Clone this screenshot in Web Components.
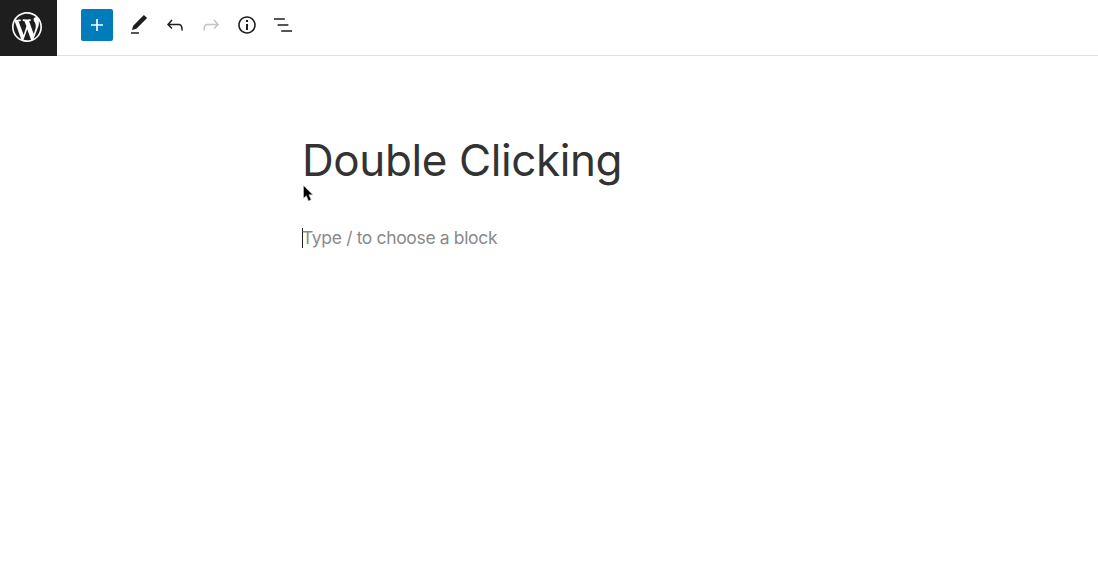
<!DOCTYPE html>
<html>
<head>
<meta charset="utf-8">
<style>
html, body { margin: 0; padding: 0; background: #fff; }
body { font-family: Inter, "Liberation Sans", sans-serif; }
</style>
</head>
<body>
<editor-app>
  <editor-toolbar slot="toolbar">
    <wp-logo slot="logo"></wp-logo>
    <tool-button variant="primary" icon="plus" label="Add block"></tool-button>
    <tool-button icon="edit" label="Tools"></tool-button>
    <tool-button icon="undo" label="Undo"></tool-button>
    <tool-button icon="redo" label="Redo" disabled></tool-button>
    <tool-button icon="info" label="Details"></tool-button>
    <tool-button icon="list" label="List view"></tool-button>
  </editor-toolbar>
  <editor-canvas slot="canvas">
    <post-title>Double Clicking</post-title>
    <block-placeholder>Type / to choose a block</block-placeholder>
  </editor-canvas>
</editor-app>

<script>
const ICONS = {
  plus: 'M18 11.2h-5.2V6h-1.6v5.2H6v1.6h5.2V18h1.6v-5.2H18z',
  edit: 'M20.1 5.1L16.9 2 6.2 12.7l-1.3 4.4 4.5-1.3L20.1 5.1zM4 20.8h8v-1.5H4v1.5z',
  undo: 'M18.3 11.7c-.6-.6-1.4-.9-2.3-.9H6.7l2.9-3.3-1.1-1-4.5 5L8.5 16l1-1-2.7-2.7H16c.5 0 .9.2 1.3.5 1 1 1 3.4 1 4.5v.3h1.5v-.2c0-1.5 0-4.3-1.5-5.7z',
  redo: 'M15.6 6.5l-1.1 1 2.9 3.3H8c-.9 0-1.7.3-2.3.9-1.4 1.5-1.4 4.2-1.4 5.6v.2h1.5v-.3c0-1.1 0-3.5 1-4.5.3-.3.7-.5 1.3-.5h9.2L14.5 15l1.1 1.1 4.6-4.6-4.6-5z',
  info: 'M12 3.2c-4.8 0-8.8 3.9-8.8 8.8 0 4.8 3.9 8.8 8.8 8.8 4.8 0 8.8-3.9 8.8-8.8 0-4.8-4-8.8-8.8-8.8zm0 16c-4 0-7.2-3.3-7.2-7.2C4.8 8 8 4.8 12 4.8s7.2 3.3 7.2 7.2c0 4-3.2 7.2-7.2 7.2zM11 17h2v-6h-2v6zm0-8h2V7h-2v2z',
  list: 'M13.8 5.2H3v1.5h10.8V5.2zm-3.6 12v1.5H21v-1.5H10.2zm7.2-6H6.6v1.5h10.8v-1.5z'
};

class ShadowBase extends HTMLElement {
  constructor() {
    super();
    this.attachShadow({ mode: 'open' });
  }
}

class EditorApp extends ShadowBase {
  connectedCallback() {
    this.shadowRoot.innerHTML = `
<style>
:host { display: flex; flex-direction: column; height: 568px; overflow: hidden; background: #fff; }
</style>
<slot name="toolbar"></slot>
<slot name="canvas"></slot>`;
  }
}

class EditorToolbar extends ShadowBase {
  connectedCallback() {
    this.shadowRoot.innerHTML = `
<style>
:host { display: flex; height: 56px; box-sizing: border-box; border-bottom: 1px solid #e0e0e0; align-items: flex-start; }
.tools { display: flex; align-items: center; height: 55px; padding-left: 24px; padding-bottom: 5px; box-sizing: border-box; }
</style>
<slot name="logo"></slot>
<div class="tools"><slot></slot></div>`;
  }
}

class WpLogo extends ShadowBase {
  connectedCallback() {
    this.shadowRoot.innerHTML = `
<style>
:host { display: flex; width: 57px; height: 56px; flex: none; background: #1e1e1e; align-items: center; justify-content: center; padding: 0 3px 3px 0; box-sizing: border-box; }
svg { display: block; fill: #fff; }
</style>
<svg width="30" height="30" viewBox="0 0 20 20" role="img" aria-label="WordPress"><path d="M20 10c0-5.51-4.49-10-10-10C4.48 0 0 4.49 0 10c0 5.52 4.48 10 10 10 5.51 0 10-4.48 10-10zM7.78 15.37L4.37 6.22c.55-.02 1.17-.08 1.17-.08.5-.06.44-1.13-.06-1.11 0 0-1.45.11-2.37.11-.18 0-.37 0-.58-.01C4.12 2.69 6.87 1.11 10 1.11c2.33 0 4.45.87 6.05 2.34-.68-.11-1.65.39-1.65 1.58 0 .74.45 1.36.9 2.1.35.61.55 1.36.55 2.46 0 1.49-1.4 5-1.4 5l-3.03-8.37c.54-.02.82-.17.82-.17.5-.05.44-1.25-.06-1.22 0 0-1.44.12-2.38.12-.87 0-2.33-.12-2.33-.12-.5-.03-.56 1.2-.06 1.22l.92.08 1.26 3.41zM17.41 10c.24-.64.74-1.87.43-4.25.7 1.29 1.05 2.71 1.05 4.25 0 3.29-1.73 6.24-4.4 7.78.97-2.59 1.94-5.2 2.92-7.78zM6.1 18.09C3.12 16.65 1.11 13.53 1.11 10c0-1.3.23-2.48.72-3.59C3.25 10.3 4.67 14.2 6.1 18.09zm4.03-6.63l2.58 6.98c-.86.29-1.76.45-2.71.45-.79 0-1.57-.11-2.29-.33.81-2.38 1.62-4.74 2.42-7.1z"/></svg>`;
  }
}

class ToolButton extends ShadowBase {
  connectedCallback() {
    const primary = this.getAttribute('variant') === 'primary';
    const disabled = this.hasAttribute('disabled');
    const d = ICONS[this.getAttribute('icon')];
    this.shadowRoot.innerHTML = `
<style>
:host { display: flex; width: 36px; height: 32px; align-items: center; justify-content: center; flex: none; }
:host([variant="primary"]) { width: 32px; margin-right: 8px; background: #007cba; border-radius: 2px; }
button { all: unset; display: flex; }
svg { display: block; width: 24px; height: 24px; fill: ${primary ? '#fff' : disabled ? '#c4c4c4' : '#1e1e1e'}; }
</style>
<button aria-label="${this.getAttribute('label')}"><svg viewBox="0 0 24 24"><path d="${d}"/></svg></button>`;
  }
}

class EditorCanvas extends ShadowBase {
  connectedCallback() {
    this.shadowRoot.innerHTML = `
<style>
:host { display: block; position: relative; flex: 1; padding: 73px 0 0 302px; }
.pointer { position: absolute; left: 303px; top: 129px; display: block; }
</style>
<slot></slot>
<svg class="pointer" width="11" height="18" viewBox="0 0 11 18"><path d="M.5.5v12.8l2.8-2.6 2.2 5.2 2.6-1.2-2.2-4.9h3.9z" fill="#000" stroke="#ccc" stroke-width=".6"/></svg>`;
  }
}

class PostTitle extends ShadowBase {
  connectedCallback() {
    this.shadowRoot.innerHTML = `
<style>
:host { display: block; font: 400 44px/62px Inter, "Liberation Sans", sans-serif; letter-spacing: -0.4px; color: #333; white-space: nowrap; }
</style>
<slot></slot>`;
  }
}

class BlockPlaceholder extends ShadowBase {
  connectedCallback() {
    this.shadowRoot.innerHTML = `
<style>
:host { display: block; margin-top: 37px; font: 400 17.5px/20px Inter, "Liberation Sans", sans-serif; letter-spacing: -0.35px; color: #8a8a8a; white-space: nowrap; }
.caret { display: inline-block; width: 1px; height: 20px; background: #1e1e1e; vertical-align: top; margin-right: -1px; }
</style>
<span class="caret"></span><slot></slot>`;
  }
}

customElements.define('editor-app', EditorApp);
customElements.define('editor-toolbar', EditorToolbar);
customElements.define('wp-logo', WpLogo);
customElements.define('tool-button', ToolButton);
customElements.define('editor-canvas', EditorCanvas);
customElements.define('post-title', PostTitle);
customElements.define('block-placeholder', BlockPlaceholder);
</script>
</body>
</html>
